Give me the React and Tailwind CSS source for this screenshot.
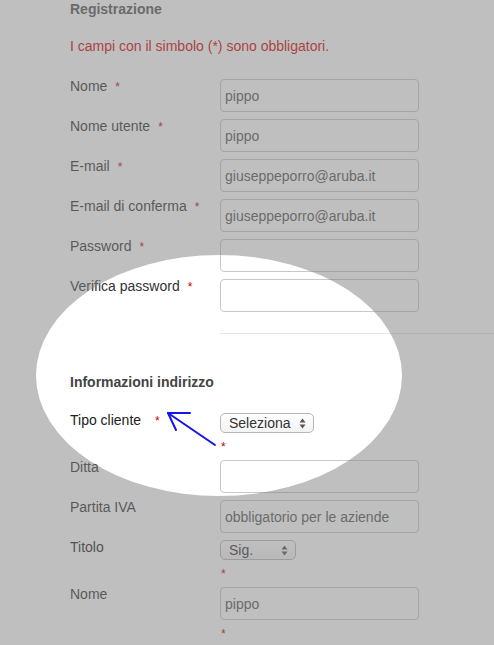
import React from "react";

const Star = ({ className = "" }) => (
  <span className={"text-[12px] text-[#cc0000] " + className}>*</span>
);

const TextRow = ({ label, value, required, gap = "ml-[8px]" }) => (
  <div className="flex items-start mb-[7px]">
    <div className="w-[150px] leading-[14px] text-[#333]">
      {label}
      {required && <Star className={gap} />}
    </div>
    <input
      readOnly
      value={value}
      className="w-[199px] h-[33px] px-[4px] border border-[#c8c8c8] rounded-[4px] bg-white text-[#555] text-[14px] outline-none"
    />
  </div>
);

const SelectBox = ({ text, width }) => (
  <div
    className={
      "h-[20px] flex items-center justify-between pl-[8px] pr-[7px] border border-[#b8b8b8] rounded-[5px] bg-gradient-to-b from-white to-[#f2f2f2] text-[#333] text-[14px] " +
      width
    }
  >
    <span>{text}</span>
    <svg width="7" height="11" viewBox="0 0 7 11">
      <path d="M3.5 0.5 L6.5 4.5 L0.5 4.5 Z" fill="#555" />
      <path d="M3.5 10.5 L6.5 6.5 L0.5 6.5 Z" fill="#555" />
    </svg>
  </div>
);

const SelectRow = ({ label, text, width, required }) => (
  <div className="flex items-start mb-[7px]">
    <div className="w-[150px] leading-[14px] text-[#222]">
      {label}
      {required && <Star className="ml-[14px]" />}
    </div>
    <div className="flex flex-col">
      <SelectBox text={text} width={width} />
      <div className="mt-[6px] h-[14px] leading-[14px] pl-[1px]">
        <Star />
      </div>
    </div>
  </div>
);

export default function App() {
  return (
    <div className="relative w-[494px] h-[645px] overflow-hidden bg-white font-['Liberation_Sans',Arial,sans-serif] text-[14px]">
      <div className="pl-[70px]">
        <h2 className="font-bold leading-[18px] text-[#555]">Registrazione</h2>
        <p className="mt-[19px] leading-[18px] text-[#d40000]">
          I campi con il simbolo (*) sono obbligatori.
        </p>

        <div className="mt-[24px]">
          <TextRow label="Nome" value="pippo" required />
          <TextRow label="Nome utente" value="pippo" required />
          <TextRow label="E-mail" value="giuseppeporro@aruba.it" required />
          <TextRow label="E-mail di conferma" value="giuseppeporro@aruba.it" required />
          <TextRow label="Password" value="" required />
          <TextRow label="Verifica password" value="" required />
        </div>

        <div className="ml-[150px] mt-[21px] h-px bg-[#e5e5e5]" />

        <h3 className="mt-[39px] font-bold leading-[18px] text-[#444]">
          Informazioni indirizzo
        </h3>

        <div className="mt-[22px]">
          <SelectRow label="Tipo cliente" text="Seleziona" width="w-[94px]" required />
          <TextRow label="Ditta" value="" />
          <TextRow label="Partita IVA" value="obbligatorio per le aziende" />
          <SelectRow label="Titolo" text="Sig." width="w-[76px]" />
          <div className="flex items-start">
            <div className="w-[150px] leading-[14px] text-[#333]">Nome</div>
            <div className="flex flex-col">
              <input
                readOnly
                value="pippo"
                className="w-[199px] h-[33px] px-[4px] border border-[#c8c8c8] rounded-[4px] bg-white text-[#555] text-[14px] outline-none"
              />
              <div className="mt-[6px] h-[14px] leading-[14px] pl-[1px]">
                <Star />
              </div>
            </div>
          </div>
        </div>
      </div>

      {/* spotlight */}
      <div className="absolute left-[36px] top-[255px] w-[366px] h-[241px] rounded-[50%] shadow-[0_0_0_2000px_rgba(128,128,128,0.5)] pointer-events-none" />

      {/* annotation arrow */}
      <svg
        className="absolute left-0 top-0 pointer-events-none"
        width="494"
        height="645"
        viewBox="0 0 494 645"
      >
        <g stroke="#1414e6" strokeWidth="2" strokeLinecap="round" fill="none">
          <line x1="215" y1="445" x2="168" y2="413" />
          <line x1="168" y1="413" x2="190" y2="413" />
          <line x1="168" y1="413" x2="176" y2="430" />
        </g>
      </svg>
    </div>
  );
}
